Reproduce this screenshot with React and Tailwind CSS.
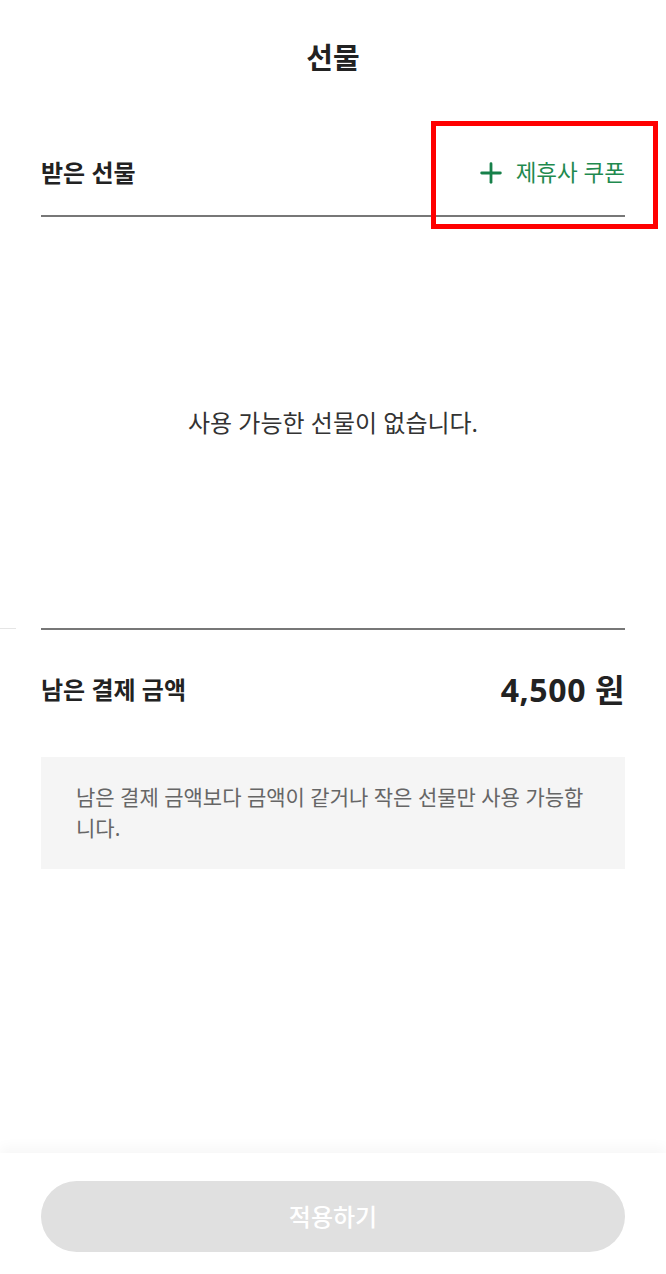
import { Plus } from 'lucide-react'

const font = { fontFamily: '"Noto Sans", "Noto Sans CJK KR", sans-serif' }

function Header() {
  return (
    <header className="h-[116px] flex items-center justify-center">
      <h1 className="text-[29px] font-bold text-[#222]">선물</h1>
    </header>
  )
}

function GiftList() {
  return (
    <section className="relative px-[41px]">
      <div className="flex items-center justify-between pt-[40px] pb-[26px] border-b-2 border-[#777]">
        <h2 className="text-[24px] leading-[33px] font-semibold text-[#222]">받은 선물</h2>
        <button className="flex items-center gap-[9px] text-[22.5px] leading-[33px] text-[#1f8a4f]">
          <Plus size={32} strokeWidth={2.1} className="text-[#17804a]" />
          <span>제휴사 쿠폰</span>
        </button>
      </div>
      <div className="absolute left-0 bottom-[-1px] w-[16px] h-px bg-[#e5e5e5]" />
      <div className="absolute left-[431px] top-[5px] w-[227px] h-[108px] border-[5px] border-[#ff0000]" />
      <div className="h-[411px] flex items-center justify-center">
        <p className="text-[24px] text-[#333]">사용 가능한 선물이 없습니다.</p>
      </div>
    </section>
  )
}

function Summary() {
  return (
    <section className="px-[41px]">
      <div className="border-t-2 border-[#777] h-[122px] flex items-center justify-between">
        <span className="text-[24px] font-semibold text-[#222]">남은 결제 금액</span>
        <span className="text-[32px] font-bold tracking-[0.6px] text-[#222]">4,500 원</span>
      </div>
      <div className="mt-[7px] bg-[#f5f5f5] px-[35px] py-[25px]">
        <p className="text-[21px] leading-[31px] text-[#666] break-all">
          남은 결제 금액보다 금액이 같거나 작은 선물만 사용 가능합니다.
        </p>
      </div>
    </section>
  )
}

export default function App() {
  return (
    <div className="min-h-screen flex flex-col bg-white" style={font}>
      <Header />
      <GiftList />
      <Summary />
      <footer className="mt-auto bg-white px-[41px] pt-[28px] pb-[22px] shadow-[0_-6px_12px_rgba(0,0,0,0.035)]">
        <button
          disabled
          className="w-full h-[71px] rounded-full bg-[#e0e0e0] text-white text-[24px] font-medium"
        >
          적용하기
        </button>
      </footer>
    </div>
  )
}
